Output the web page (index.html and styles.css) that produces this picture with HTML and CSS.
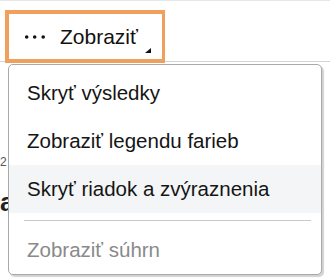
FILE: index.html
```html
<!DOCTYPE html>
<html lang="sk">
<head>
<meta charset="utf-8">
<title>Zobraziť</title>
<link rel="stylesheet" href="styles.css">
</head>
<body>
<div class="page">
  <div class="toolbar">
    <button class="btn" type="button">
      <svg class="dots" width="22" height="6" viewBox="0 0 22 6" aria-hidden="true">
        <circle cx="2.7" cy="3" r="1.8"/>
        <circle cx="10.7" cy="3" r="1.8"/>
        <circle cx="19.2" cy="3" r="1.8"/>
      </svg>
      <span class="btn-label">Zobraziť</span>
      <svg class="caret" width="6" height="5" viewBox="0 0 6 5" aria-hidden="true">
        <polygon points="6,0 6,5 0,5"/>
      </svg>
    </button>
  </div>
  <div class="content">
    <div class="meta">2</div>
    <div class="heading">a</div>
  </div>
  <ul class="menu">
    <li class="item">Skryť výsledky</li>
    <li class="item">Zobraziť legendu farieb</li>
    <li class="item hover">Skryť riadok a zvýraznenia</li>
    <li class="sep" role="separator"></li>
    <li class="item disabled">Zobraziť súhrn</li>
  </ul>
</div>
</body>
</html>
```
FILE: styles.css
```css
html, body {
  margin: 0;
  padding: 0;
  background: #ffffff;
}
body {
  font-family: "Liberation Sans", Arial, sans-serif;
  color: #151515;
}
.page {
  position: relative;
  width: 330px;
  height: 278px;
  overflow: hidden;
}
.toolbar {
  height: 62px;
  box-sizing: border-box;
  border-top: 1px solid #e6e6e6;
  border-bottom: 1px solid #d4d4d4;
  padding: 9px 0 0 5px;
}
.btn {
  display: flex;
  align-items: center;
  box-sizing: border-box;
  width: 160px;
  height: 53px;
  margin: 0;
  padding: 0 0 0 15px;
  border: 4px solid #f09f5c;
  border-right-width: 3px;
  background: #ffffff;
  font: inherit;
  font-size: 21px;
  color: #111111;
  position: relative;
}
.dots {
  fill: #111111;
  flex: none;
}
.btn-label {
  margin-left: 14px;
  line-height: 24px;
}
.caret {
  position: absolute;
  right: 11px;
  bottom: 6px;
  fill: #111111;
}
.content {
  padding-top: 93px;
}
.meta {
  font-size: 12px;
  color: #555555;
  line-height: 14px;
}
.heading {
  font-size: 26px;
  font-weight: bold;
  color: #222222;
  line-height: 30px;
  margin-top: 18px;
}
.menu {
  position: absolute;
  left: 8px;
  top: 64px;
  width: 314px;
  box-sizing: border-box;
  margin: 0;
  padding: 4px 0 0 0;
  list-style: none;
  background: #ffffff;
  border: 1px solid #a9a9a9;
  border-radius: 5px;
  box-shadow: 2px 2px 1px rgba(0, 0, 0, 0.18);
}
.item {
  height: 48px;
  line-height: 48px;
  padding-left: 18px;
  font-size: 20.5px;
  color: #151515;
  white-space: nowrap;
}
.item.hover {
  background: #f4f5f7;
}
.item.disabled {
  color: #8a8a8a;
}
.sep {
  height: 1px;
  margin: 7px 10px 5px 15px;
  background: #c9c9c9;
}
```
